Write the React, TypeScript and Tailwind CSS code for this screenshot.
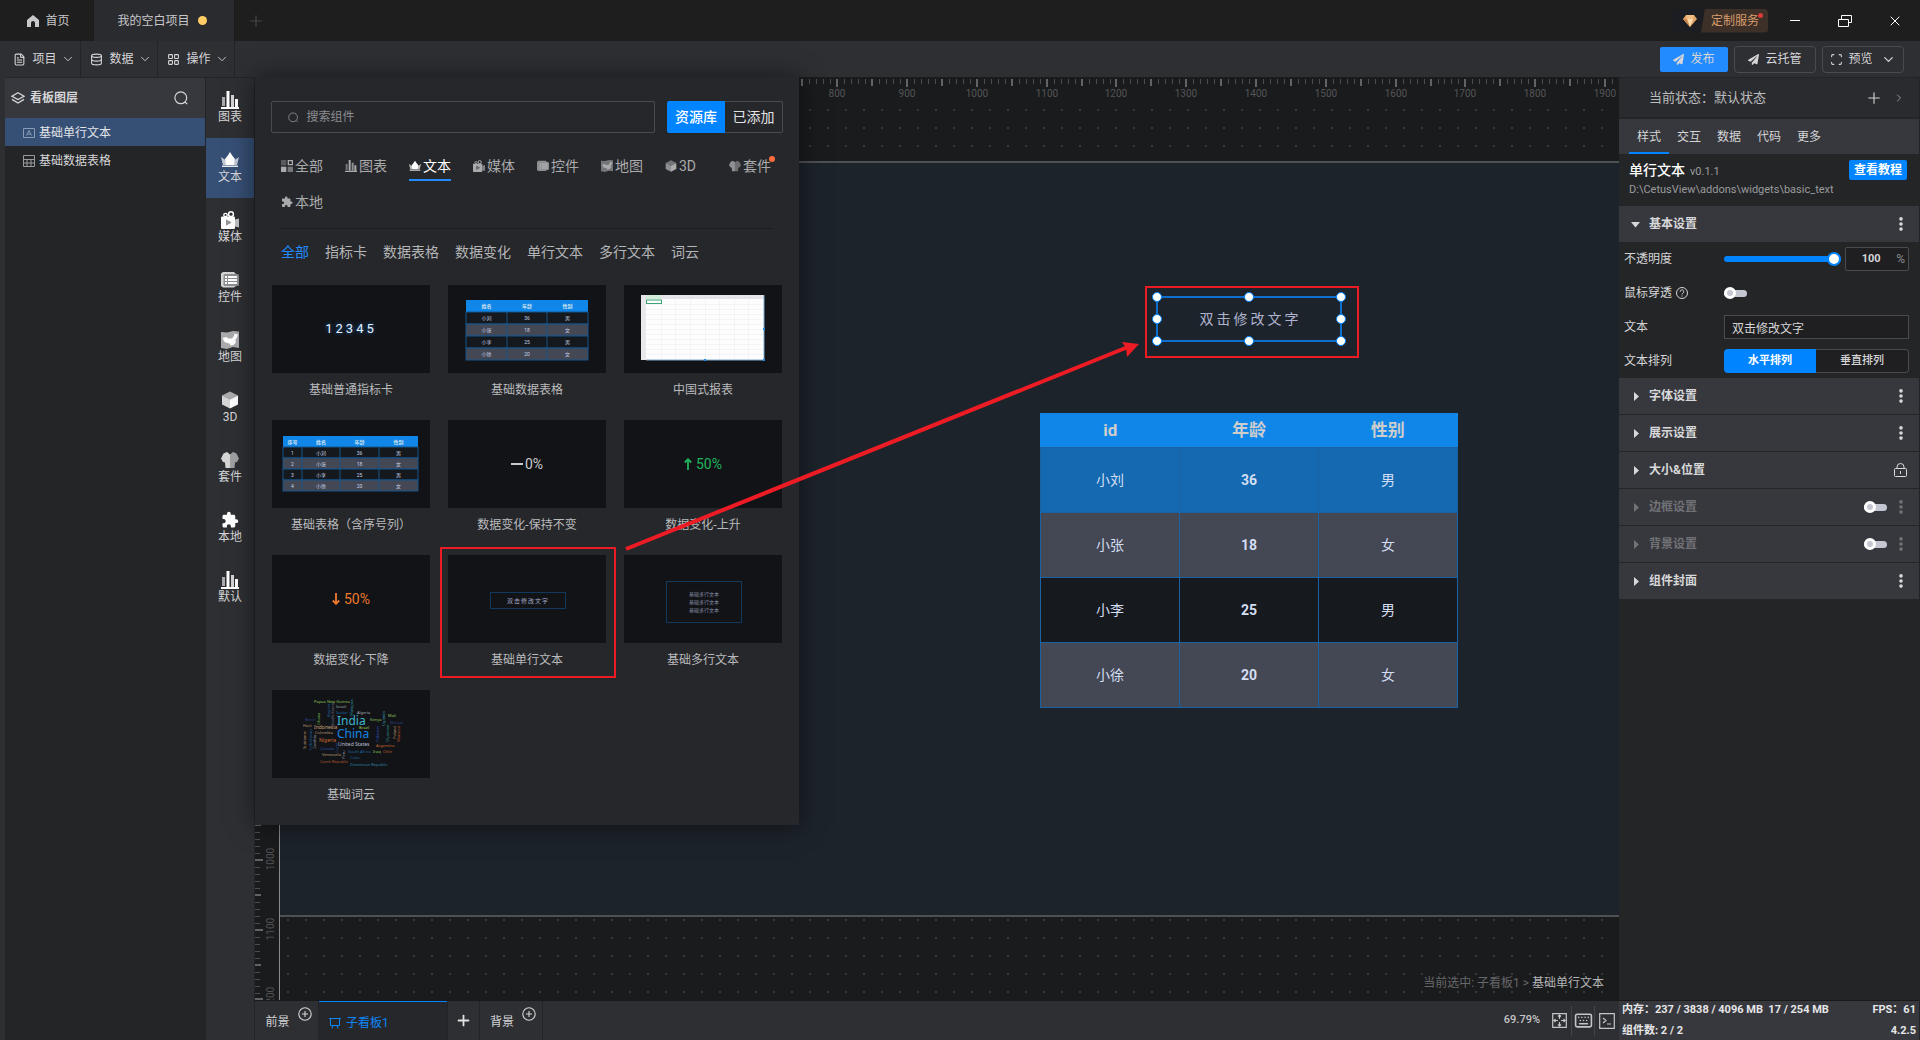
import React, { useState } from 'react'
import { ChevronDown, ChevronRight, Database, FileText, Keyboard, LayoutGrid, Plus, Scan, X } from 'lucide-react'
import { FaPaperPlane } from 'react-icons/fa'
import { MdExtension } from 'react-icons/md'
import clsx from 'clsx'

type IconProps = { size?: number }

const ChartIcon = ({ size = 18 }: IconProps) => (
  <svg width={size} height={size} viewBox="0 0 18 18" fill="currentColor">
    <path d="M1 6h3v9H1z" opacity=".6" />
    <path d="M5.500 0h3v16h-3z" />
    <path d="M10 4h3v12h-3z" opacity=".8" />
    <path d="M14 8h3v8h-3zM0 16h18v2H0z" />
  </svg>
)

const CrownIcon = ({ size = 18 }: IconProps) => (
  <svg width={size} height={size} viewBox="0 0 18 18" fill="currentColor">
    <path d="M0 6l4.500 3 1 5H2zM18 6l-4.500 3-1 5H16z" opacity=".7" />
    <path d="M9 1l2.200 3.600L14 8l-1 6H5L4 8l2.800-3.400z" />
    <path d="M1 14.500h16V16H1z" opacity=".9" />
  </svg>
)

const MediaIcon = ({ size = 18 }: IconProps) => (
  <svg width={size} height={size} viewBox="0 0 18 18" fill="currentColor">
    <circle cx="4.500" cy="4" r="1.700" fill="none" stroke="currentColor" strokeWidth="1.300" />
    <circle cx="10" cy="3.200" r="2.400" fill="none" stroke="currentColor" strokeWidth="1.500" />
    <path d="M14 8.500l4-1v9l-4-1z" opacity=".7" />
    <path fillRule="evenodd" d="M1 5.500h12a1 1 0 011 1V17a1 1 0 01-1 1H1a1 1 0 01-1-1V6.500a1 1 0 011-1zM5 8.500v6l5.500-3z" />
    <path d="M5 8.500v6l5.500-3z" opacity=".5" />
  </svg>
)

const WidgetIcon = ({ size = 18 }: IconProps) => (
  <svg width={size} height={size} viewBox="0 0 18 18" fill="currentColor">
    <path d="M2 1h11l2 2v12l-2 1.500H2L0 15V2.500z" opacity=".8" />
    <rect x="2.500" y="3" width="15.500" height="12" rx="1.500" fill="#8d8e90" />
    <path d="M4 5h2v2H4zM7 5h9v2H7zM4 8h2v2H4zM7 8h9v2H7zM4 11h2v2H4zM7 11h9v2H7z" />
  </svg>
)

const MapIcon = ({ size = 18 }: IconProps) => (
  <svg width={size} height={size} viewBox="0 0 18 18" fill="currentColor">
    <path d="M0 1l6 .5 6-1.500 6 .5V17l-6-1-6 2-6-1z" opacity=".6" />
    <path d="M1.500 7l4-1 1.500 1.500h4L13 5l.5-2.500 3.500 1-1 3-1.500 2 .5 3-2.500 2.500-3 .5-1-2-2.500-.5-2.500-1z" />
  </svg>
)

const CubeIcon = ({ size = 18 }: IconProps) => (
  <svg width={size} height={size} viewBox="0 0 18 18" fill="currentColor">
    <path d="M9 .5l8 4-8 4-8-4z" opacity=".6" />
    <path d="M1 4.500l8 4v9l-8-4z" opacity=".8" />
    <path d="M17 4.500l-8 4v9l8-4z" />
  </svg>
)

const SuitIcon = ({ size = 18 }: IconProps) => (
  <svg width={size} height={size} viewBox="0 0 18 18" fill="currentColor">
    <path d="M6 1l3 2.500V17H4.500L4 11.500 2 11 0 7.500 2.500 2.500z" opacity=".8" />
    <path d="M12 1L9 3.500V17h4.500l.5-5.500 2-.5 2-3.500-2.500-5z" opacity=".55" />
  </svg>
)

const AllIcon = ({ size = 18 }: IconProps) => (
  <svg width={size} height={size} viewBox="0 0 18 18" fill="currentColor">
    <path d="M0 0h8v8H0z" opacity=".4" />
    <path d="M11 1h6v6h-6z" fill="none" stroke="currentColor" strokeWidth="2" />
    <path d="M0 10h8v8H0z" />
    <path d="M10 10h8v8h-8z" opacity=".6" />
  </svg>
)

const SearchIcon = ({ size = 14 }: IconProps) => (
  <svg width={size} height={size} viewBox="0 0 14 14" fill="none" stroke="currentColor" strokeWidth="1.200">
    <circle cx="6.800" cy="6.800" r="5.900" />
    <path d="M11 11l2.200 2.200" />
  </svg>
)

const PlusCircleIcon = () => (
  <svg width={14} height={14} viewBox="0 0 14 14" fill="none" stroke="currentColor" strokeWidth="1.100">
    <circle cx="7" cy="7" r="6.200" />
    <path d="M7 4v6M4 7h6" />
  </svg>
)

const MoreIcon = () => (
  <svg width={4} height={14} viewBox="0 0 4 14" fill="currentColor">
    <circle cx="2" cy="1.900" r="1.800" />
    <circle cx="2" cy="7" r="1.800" />
    <circle cx="2" cy="12.100" r="1.800" />
  </svg>
)

const RAIL = [
  { label: '图表', icon: ChartIcon },
  { label: '文本', icon: CrownIcon },
  { label: '媒体', icon: MediaIcon },
  { label: '控件', icon: WidgetIcon },
  { label: '地图', icon: MapIcon },
  { label: '3D', icon: CubeIcon },
  { label: '套件', icon: SuitIcon },
  { label: '本地', icon: MdExtension },
  { label: '默认', icon: ChartIcon },
]

const CATEGORIES = [
  { label: '全部', icon: AllIcon },
  { label: '图表', icon: ChartIcon },
  { label: '文本', icon: CrownIcon },
  { label: '媒体', icon: MediaIcon },
  { label: '控件', icon: WidgetIcon },
  { label: '地图', icon: MapIcon },
  { label: '3D', icon: CubeIcon },
  { label: '套件', icon: SuitIcon, dot: true },
  { label: '本地', icon: MdExtension },
]

const FILTERS = ['全部', '指标卡', '数据表格', '数据变化', '单行文本', '多行文本', '词云']

const TABLE_ROWS = [
  { name: '小刘', age: '36', sex: '男', bg: 'bg-[#1469b1]' },
  { name: '小张', age: '18', sex: '女', bg: 'bg-[#444754]' },
  { name: '小李', age: '25', sex: '男', bg: 'bg-[#16191e]' },
  { name: '小徐', age: '20', sex: '女', bg: 'bg-[#444754]' },
]

const MiniTable = ({ x, width, y, rowHeight, cols, head, rows }: {
  x: number
  width: number
  y: number
  rowHeight: number
  cols: number[]
  head: string[]
  rows: string[][]
}) => {
  const edges = [...cols, x + width]
  return (
    <svg viewBox="0 0 158 88" className="size-full" textAnchor="middle" fontSize="5">
      <rect x={x} y={y} width={width} height={rowHeight} fill="#1087e8" />
      {head.map((h, i) => (
        <text key={h} x={(edges[i] + edges[i + 1]) / 2} y={y + rowHeight / 2 + 2} fill="#d3e2ee" fontWeight="700">{h}</text>
      ))}
      {rows.map((row, r) => (
        <g key={r}>
          <rect x={x} y={y + rowHeight * (r + 1)} width={width} height={rowHeight} fill={r % 2 ? '#444754' : '#15181d'} stroke="#17548a" strokeWidth="1" />
          {row.map((c, i) => (
            <text key={i} x={(edges[i] + edges[i + 1]) / 2} y={y + rowHeight * (r + 1.5) + 2} fill="#c6d3e8">{c}</text>
          ))}
        </g>
      ))}
      {cols.slice(1).map((c) => (
        <path key={c} d={`M${c} ${y + rowHeight}V${y + rowHeight * 5}`} stroke="#17548a" />
      ))}
    </svg>
  )
}

const SheetThumb = () => (
  <svg viewBox="0 0 158 88" className="size-full">
    <rect x="17" y="10" width="123" height="65" fill="#fdfdfe" />
    <path d="M17 10h123v4H17z" fill="#e6e4e8" />
    <path d="M17 14h5v61h-5z" fill="#e9e9ec" />
    <path d="M22 10h15v4H22z" fill="#d3ecda" />
    <path d="M22 19.500h117M22 24.500h117M22 29.500h117M22 34.500h117M22 39.500h117M22 44.500h117M22 49.500h117M22 54.500h117M22 59.500h117M22 64.500h117M22 69.500h117M37.500 14v60M51.500 14v60M66.500 14v60M81.500 14v60M95.500 14v60M110.500 14v60M124.500 14v60" stroke="#efeff2" strokeWidth=".7" />
    <rect x="22.500" y="15" width="15" height="3.500" fill="#fff" stroke="#3da276" />
    <path d="M140 10v65H22" fill="none" stroke="#7fa9cc" />
    <path d="M139 43h2v2h-2zM80 74h2v2h-2zM139 74h2v2h-2z" fill="#2488e0" />
  </svg>
)

// text, x, baseline y, size, colour, vertical
const WORDS: [string, number, number, number, string, boolean?][] = [
  ['Papua New Guinea', 42, 13, 4, '#8fc25a'],
  ['Israel', 64, 18, 4, '#9aa0a8'],
  ['Malaysia', 81, 26, 4, '#2f8fa5', true],
  ['South Korea', 62, 36, 4, '#6c7484', true],
  ['Angola', 58, 27, 4, '#1c5d91', true],
  ['Sudan', 64, 24, 4, '#1a5f9c'],
  ['Algeria', 85, 24, 4, '#a8adb5'],
  ['Mali', 116, 27, 4, '#93c65c'],
  ['Benin', 33, 31, 4, '#2a3f84'],
  ['Ghana', 48, 35, 4, '#6ba548', true],
  ['India', 65, 35, 12, '#3db5cf'],
  ['Kenya', 98, 31, 4, '#8fc25a'],
  ['Uganda', 113, 36, 4, '#3293a0', true],
  ['Malawi', 118, 34, 4, '#2c3d78'],
  ['Haiti', 31, 37, 4, '#b4926b'],
  ['Indonesia', 42, 39, 5, '#cfa27a'],
  ['Brazil', 87, 39, 4, '#9fd15f'],
  ['Pakistan', 107, 52, 4, '#2b4aa8', true],
  ['Myanmar', 117, 52, 4, '#297f78', true],
  ['Poland', 124, 49, 4, '#b38e68', true],
  ['Morocco', 128, 52, 4, '#c05a2a', true],
  ['Colombia', 43, 44, 4, '#b5946e'],
  ['China', 65, 48, 12, '#1583e0'],
  ['Suriname', 34, 59, 4, '#a88a68', true],
  ['Uzbekistan', 40, 60, 4, '#1c5d91', true],
  ['Zambia', 44, 59, 4, '#8a8f9a', true],
  ['Nigeria', 47, 52, 5, '#cf6a2e'],
  ['United States', 66, 56, 5, '#b8bfd2'],
  ['Argentina', 104, 57, 4, '#c46630'],
  ['Canada', 48, 60, 4, '#2b4a9c'],
  ['Egypt', 66, 63, 4, '#263c7c', true],
  ['Venezuela', 50, 66, 4, '#b59a72'],
  ['Peru', 73, 69, 4, '#8f95a2', true],
  ['South Africa', 76, 63, 4, '#1d639c'],
  ['Iraq', 101, 63, 4, '#8fc25a'],
  ['Chile', 111, 63, 4, '#bd5a2c'],
  ['Cuba', 78, 69, 4, '#1c5d91'],
  ['Czech Republic', 48, 73, 4, '#b65a30'],
  ['Dominican Republic', 78, 76, 4, '#2e86a8'],
]

const WordCloud = () => (
  <svg viewBox="0 0 158 88" className="size-full font-['Noto_Sans',sans-serif]">
    {WORDS.map(([word, x, y, size, fill, vertical]) => (
      <text key={word} x={x} y={y} fontSize={size} fill={fill} transform={vertical ? `rotate(-90 ${x} ${y})` : undefined}>{word}</text>
    ))}
  </svg>
)

const ArrowGlyph = ({ down }: { down?: boolean }) => (
  <svg width={8} height={12} viewBox="0 0 8 12" fill="none" stroke="currentColor" strokeWidth="1.800">
    <path d={down ? 'M4 0v11M.8 7.500L4 10.800l3.200-3.300' : 'M4 12V1M.8 4.500L4 1.200l3.200 3.300'} />
  </svg>
)

const CARDS: { label: string; marked?: boolean; thumb: React.ReactNode }[] = [
  {
    label: '基础普通指标卡',
    thumb: <span className="text-[13px] tracking-[3px] text-[#e4f2ff] [text-shadow:0_0_4px_#1a6cc0]">12345</span>,
  },
  {
    label: '基础数据表格',
    thumb: (
      <MiniTable x={18} y={15} width={122} rowHeight={12} cols={[18, 59, 99]} head={['姓名', '年龄', '性别']}
        rows={[['小刘', '36', '男'], ['小张', '18', '女'], ['小李', '25', '男'], ['小徐', '20', '女']]} />
    ),
  },
  { label: '中国式报表', thumb: <SheetThumb /> },
  {
    label: '基础表格（含序号列）',
    thumb: (
      <MiniTable x={11} y={16} width={135} rowHeight={11} cols={[11, 30, 68, 107]} head={['序号', '姓名', '年龄', '性别']}
        rows={[['1', '小刘', '36', '男'], ['2', '小张', '18', '女'], ['3', '小李', '25', '男'], ['4', '小徐', '20', '女']]} />
    ),
  },
  {
    label: '数据变化-保持不变',
    thumb: (
      <span className="flex items-center gap-[2px] text-sm text-[#c9cacd]">
        <span className="h-[2px] w-3 bg-current" />0%
      </span>
    ),
  },
  {
    label: '数据变化-上升',
    thumb: <span className="flex items-center gap-1 text-sm text-[#1fb45c]"><ArrowGlyph />50%</span>,
  },
  {
    label: '数据变化-下降',
    thumb: <span className="flex items-center gap-1 text-sm text-[#ef7a2d]"><ArrowGlyph down />50%</span>,
  },
  {
    label: '基础单行文本',
    marked: true,
    thumb: (
      <svg viewBox="0 0 158 88" className="size-full">
        <rect x="42.500" y="37.500" width="75" height="16" fill="none" stroke="#11395f" />
        <text x="80" y="48" textAnchor="middle" fontSize="6" letterSpacing="1" fill="#a6abc6">双击修改文字</text>
      </svg>
    ),
  },
  {
    label: '基础多行文本',
    thumb: (
      <svg viewBox="0 0 158 88" className="size-full" textAnchor="middle" fontSize="5" fill="#8a8fa8">
        <rect x="42.500" y="26.500" width="75" height="41" fill="none" stroke="#11395f" />
        <text x="80" y="41">基础多行文本</text>
        <text x="80" y="49">基础多行文本</text>
        <text x="80" y="57">基础多行文本</text>
      </svg>
    ),
  },
  { label: '基础词云', thumb: <WordCloud /> },
]

const SECTIONS = [
  { label: '字体设置' },
  { label: '展示设置' },
  { label: '大小&位置', lock: true },
  { label: '边框设置', off: true },
  { label: '背景设置', off: true },
  { label: '组件封面' },
]

const UNIT = 0.6979

const tickPositions = (from: number, to: number, step: number) => {
  const out: number[] = []
  for (let v = from; v <= to; v += step) out.push(v)
  return out
}

const TopRuler = () => (
  <svg className="h-6 w-full overflow-hidden">
    {tickPositions(0, 1920, 10).map((v) => {
      const major = v % 100 === 0
      const mid = v % 50 === 0
      return <rect key={v} x={Math.round(v * UNIT) + 24 - (mid ? 1 : 0)} y={2} width={mid ? 2 : 1} height={major ? 8 : mid ? 7 : 5} fill={mid ? '#626366' : '#4c4d50'} />
    })}
    {tickPositions(0, 1900, 100).map((v) => (
      <text key={v} x={Math.round(v * UNIT) + 24} y={20} fontSize="10" textAnchor="middle" fill="#545558">{v}</text>
    ))}
  </svg>
)

const LeftRuler = () => (
  <svg className="h-full w-6 overflow-hidden">
    {tickPositions(0, 1200, 10).map((v) => {
      const major = v % 100 === 0
      const mid = v % 50 === 0
      return <rect key={v} x={0} y={Math.round(v * UNIT) + 61 - (mid ? 1 : 0)} width={major ? 8 : mid ? 6 : 5} height={mid ? 2 : 1} fill={mid ? '#626366' : '#4c4d50'} />
    })}
    {tickPositions(0, 1200, 100).map((v) => {
      const y = Math.round(v * UNIT) + 60
      return <text key={v} x={19} y={y} fontSize="10" textAnchor="middle" fill="#545558" transform={`rotate(-90 19 ${y})`}>{v}</text>
    })}
  </svg>
)

const Switch = ({ id, label }: { id: string; label: string }) => (
  <input
    id={id}
    type="checkbox"
    role="switch"
    aria-label={label}
    className="relative h-[7px] w-[23px] shrink-0 appearance-none rounded-full bg-[#c4c7d2] before:absolute before:-top-[3px] before:left-0 before:size-[12px] before:rounded-full before:border-[3px] before:border-white before:bg-[#c4c7d2] checked:bg-[#0084ff]"
  />
)

const TitleBar = () => (
  <header className="flex h-[41px] shrink-0 items-stretch bg-[#1e1e1e] text-xs text-[#c8c8ca]">
    <button className="flex w-[94px] items-center justify-center gap-[6px] border-r border-[#19191a] pl-1">
      <svg width={12} height={12} viewBox="0 0 12 12" fill="currentColor"><path d="M6 0l6 5v7H8V8a2 2 0 00-4 0v4H0V5z" /></svg>
      首页
    </button>
    <button className="flex w-[140px] items-center justify-center gap-2 bg-[#2a2b2f] pr-1">
      我的空白项目
      <span className="size-[9px] rounded-full bg-[#ffcc66]" />
    </button>
    <button aria-label="新建" className="flex w-[42px] items-center justify-center border-l border-[#19191a] text-[#48494b]"><Plus size={18} strokeWidth={1.500} /></button>
    <div className="ml-auto flex items-center">
      <a href="#service" className="relative mr-4 flex h-6 items-stretch overflow-hidden rounded-sm bg-[#1c1d22] text-[#d99c6c]">
        <span className="flex w-[29px] items-center justify-end pr-1">
          <svg width={14} height={12} viewBox="0 0 14 12">
            <path d="M3 0h8l3 4-7 8-7-8z" fill="#e3a468" />
            <path d="M4 4h6l-3 8z" fill="#ffdcae" />
            <path d="M0 4h4l3 8z" fill="#cf8a50" />
            <path d="M3 0h8L10 4H4z" fill="#f2bd83" />
          </svg>
        </span>
        <span className="flex items-center bg-[#3d3029] pr-[9px] pl-[10px] [clip-path:polygon(4px_0,100%_0,100%_100%,0_100%)]">定制服务</span>
        <span className="absolute top-1 right-[5px] size-[5px] rounded-full bg-[#d93a3a]" />
      </a>
      <button aria-label="最小化" className="flex w-[22px] justify-center text-white"><span className="h-px w-[10px] bg-current" /></button>
      <button aria-label="还原" className="ml-7 flex w-[22px] justify-center text-white">
        <svg width={14} height={12} viewBox="0 0 14 12" fill="none" stroke="currentColor"><path d="M.5 4.500h10v7H.5zM3.500 4.500v-4h10v7h-3" /></svg>
      </button>
      <button aria-label="关闭" className="mr-[14px] ml-7 flex w-[22px] justify-center text-white"><X size={16} strokeWidth={1.500} /></button>
    </div>
  </header>
)

const MENUS = [
  { label: '项目', icon: FileText },
  { label: '数据', icon: Database },
  { label: '操作', icon: LayoutGrid },
]

const Toolbar = () => (
  <div className="flex h-9 shrink-0 items-stretch bg-[#2e2f33] pl-1 text-xs text-[#d5d5d7]">
    {MENUS.map(({ label, icon: Icon }) => (
      <button key={label} className="flex w-[77px] items-center justify-center border-r border-[#232427] pl-1">
        <Icon size={13} strokeWidth={2} />
        <span className="ml-[6px]">{label}</span>
        <ChevronDown size={14} strokeWidth={1.500} className="ml-1" />
      </button>
    ))}
    <div className="ml-auto flex items-center gap-[6px] pr-4">
      <button className="flex h-[25px] w-[68px] items-center justify-center gap-[6px] rounded-xs bg-[#228bff]">
        <FaPaperPlane size={11} />发布
      </button>
      <button className="flex h-[27px] w-[82px] items-center justify-center gap-[6px] rounded-sm border border-[#4a4b50]">
        <FaPaperPlane size={11} />云托管
      </button>
      <button className="flex h-[27px] w-[82px] items-center justify-center rounded-sm border border-[#4a4b50]">
        <Scan size={13} strokeWidth={2} />
        <span className="ml-[5px]">预览</span>
        <ChevronDown size={15} strokeWidth={2} className="ml-2" />
      </button>
    </div>
  </div>
)

const LayerPanel = () => (
  <aside className="w-[201px] shrink-0 border-t border-r border-[#232427] bg-[#242527] text-xs">
    <div className="flex h-10 items-center bg-[#37383d] pr-[17px] pl-[6px]">
      <svg width={14} height={12} viewBox="0 0 14 12" fill="none" stroke="#d5d5d7" strokeWidth="1.300">
        <path d="M7 .8l6 3.400-6 3.400-6-3.400zM1 7.400l6 3.600 6-3.600" />
      </svg>
      <h2 className="ml-[5px] font-bold text-[#d5d5d7]">看板图层</h2>
      <button aria-label="搜索图层" className="ml-auto text-[#d5d5d7]"><SearchIcon /></button>
    </div>
    <button className="flex h-7 w-full items-center gap-1 bg-[#364f75] pt-px pl-[18px] text-[#e2e4e8]">
      <svg width={12} height={10} viewBox="0 0 12 10" fill="none" stroke="#8a9bb5"><path d="M.5.5h11v9H.5zM3.500 7.500L6 2.500l2.500 5M4.500 6h3" /></svg>
      基础单行文本
    </button>
    <button className="flex h-7 w-full items-center gap-1 pt-px pl-[18px] text-[#d5d5d7]">
      <svg width={12} height={12} viewBox="0 0 12 12" fill="none" stroke="#9a9b9d"><path d="M.5.5h11v11H.5zM.5 4.500h11M.5 8h11M4 4.500v7M8 4.500v7" /></svg>
      基础数据表格
    </button>
  </aside>
)

const Library = () => (
  <section className="absolute top-0 left-0 w-[544px] bg-[#26272b] px-4 pt-6 pb-5 shadow-[0_0_24px_rgba(0,0,0,0.5)]">
    <div className="flex h-8 gap-3">
      <label className="flex flex-1 items-center gap-2 rounded-xs border border-[#4a4b4f] px-4 text-[#8b8c90]">
        <SearchIcon size={11} />
        <input type="search" aria-label="搜索组件" placeholder="搜索组件" className="w-full bg-transparent text-xs outline-none placeholder:text-[#8b8c90]" />
      </label>
      <div className="flex text-sm text-[#e2e2e4]">
        <button className="w-[58px] rounded-l-xs bg-[#0084ff] font-medium text-white">资源库</button>
        <button className="w-[58px] rounded-r-xs border border-l-0 border-[#4a4b4f]">已添加</button>
      </div>
    </div>

    <nav className="mx-[10px] mt-[18px] flex flex-wrap gap-x-[22px] gap-y-[6px] border-b border-[#1c1d20] pb-[11px] text-sm">
      {CATEGORIES.map(({ label, icon: Icon, dot }) => (
        <button
          key={label}
          className={clsx('relative flex h-[30px] w-[42px] items-center gap-[2px] whitespace-nowrap border-y-2 border-transparent', label === '文本' ? 'border-b-[#228bff] text-white' : 'text-[#a9aaac]')}
        >
          <Icon size={12} />
          {label}
          {dot && <span className="absolute top-[3px] -right-1 size-[6px] rounded-full bg-[#ff6b3d]" />}
        </button>
      ))}
    </nav>

    <div className="mx-[10px] mt-[13px] flex gap-4 text-sm leading-5 text-[#b4b5b7]">
      {FILTERS.map((f, i) => (
        <button key={f} className={clsx(i === 0 && 'text-[#228bff]')}>{f}</button>
      ))}
    </div>

    <ul className="mx-px mt-[23px] grid grid-cols-3 gap-x-[18px] gap-y-5">
      {CARDS.map(({ label, marked, thumb }) => (
        <li key={label} className="relative text-center">
          <div className="flex h-[88px] items-center justify-center bg-[#121317]">{thumb}</div>
          <p className="mt-[7px] text-xs leading-5 text-[#b9babc]">{label}</p>
          {marked && <span className="absolute -top-2 -right-[10px] -bottom-2 -left-2 border-2 border-[#ed1c24]" />}
        </li>
      ))}
    </ul>
  </section>
)

const HANDLES = [
  'top-0 left-0', 'top-0 left-1/2', 'top-0 left-full',
  'top-1/2 left-0', 'top-1/2 left-full',
  'top-full left-0', 'top-full left-1/2', 'top-full left-full',
]

const Board = () => (
  <div className="relative mt-[60px] h-[756px] border-y-2 border-[#4f5052] bg-[#1c232a]">
    <div className="absolute top-[123px] left-[865px] h-[72px] w-[214px] border-2 border-[#ed1c24]">
      <div className="absolute top-2 left-[9px] flex h-[46px] w-[186px] items-center justify-center border-2 border-[#0f6fcf] text-sm text-[#b0b3cf]">
        <span className="pl-[3px] tracking-[3px]">双击修改文字</span>
        <div className="absolute -inset-px">
          {HANDLES.map((pos) => (
            <span key={pos} className={clsx('absolute size-[10px] -translate-x-1/2 -translate-y-1/2 rounded-full border border-[#0084ff] bg-white', pos)} />
          ))}
        </div>
      </div>
    </div>

    <table className="absolute top-[250px] left-[760px] w-[418px] table-fixed border-collapse text-center text-sm text-[#d3def2]">
      <thead>
        <tr className="h-[34px] border border-[#1087e8] bg-[#1087e8] text-[17px] text-[#cdcdcd]">
          <th className="p-0">id</th>
          <th className="p-0">年龄</th>
          <th className="p-0">性别</th>
        </tr>
      </thead>
      <tbody>
        {TABLE_ROWS.map(({ name, age, sex, bg }) => (
          <tr key={name} className={clsx('h-[65px]', bg)}>
            <td className="border border-[#1a62a3] p-0">{name}</td>
            <td className="border border-[#1a62a3] p-0 font-bold">{age}</td>
            <td className="border border-[#1a62a3] p-0">{sex}</td>
          </tr>
        ))}
      </tbody>
    </table>
  </div>
)

const BottomBar = () => (
  <footer className="flex h-10 shrink-0 items-stretch border-t border-[#19191a] bg-[#2e2f33] text-xs text-[#d5d5d7]">
    <button className="flex w-16 items-start justify-center gap-2 border-r border-[#232427] pt-[6px] pl-1">
      <span className="pt-[7px]">前景</span><PlusCircleIcon />
    </button>
    <button className="flex w-32 items-center gap-[5px] border-t border-[#0084ff] bg-[#26272b] pt-1 pl-[10px] text-[#0f86f5]">
      <svg width={12} height={11} viewBox="0 0 12 11" fill="none" stroke="currentColor"><path d="M0 .5h12M1.500.5v7h9v-7M4 7.500L3 10.500M8 7.500l1 3" /></svg>
      子看板1
    </button>
    <button aria-label="添加看板" className="flex w-[33px] items-center justify-center border-x border-[#232427] text-[#e2e2e4]"><Plus size={17} strokeWidth={2.500} /></button>
    <button className="flex w-[63px] items-start justify-center gap-2 border-r border-[#232427] pt-[6px] pl-1">
      <span className="pt-[7px]">背景</span><PlusCircleIcon />
    </button>
    <div className="ml-auto flex items-center text-[#c4c5c7]">
      <span className="mr-[7px] text-[11px] font-medium">69.79%</span>
      <button aria-label="适应画布" className="flex w-6 justify-center">
        <svg width={15} height={15} viewBox="0 0 15 15" fill="none" stroke="currentColor" strokeWidth="1.200">
          <path d="M.7.7h13.600v13.600H.7zM7.500 2v4M7.500 9v4M2 7.500h4M9 7.500h4M6 3.500L7.500 2 9 3.500M6 11.500L7.500 13 9 11.500M3.500 6L2 7.500 3.500 9M11.500 6L13 7.500 11.500 9" />
        </svg>
      </button>
      <button aria-label="快捷键" className="flex h-[30px] w-6 items-center justify-center border-x border-[#434448]"><Keyboard size={19} strokeWidth={2} /></button>
      <button aria-label="控制台" className="flex w-6 justify-center">
        <svg width={16} height={16} viewBox="0 0 16 16" fill="none" stroke="currentColor" strokeWidth="1.200"><path d="M.7.7h14.600v14.600H.7zM4 5l3 2.500L4 10M8 11h4" /></svg>
      </button>
    </div>
  </footer>
)

const SectionHead = ({ label, lock, off, open }: { label: string; lock?: boolean; off?: boolean; open?: boolean }) => (
  <div className={clsx('flex h-9 items-center bg-[#37383d] pr-4 pl-3', off ? 'text-[#717276]' : 'text-[#d8d8da]')}>
    <button aria-expanded={!!open} className="flex flex-1 items-center text-xs font-bold">
      <span className="flex w-[18px]">
        <svg width={9} height={9} viewBox="0 0 9 9" fill="currentColor"><path d={open ? 'M0 2h9L4.500 7.500z' : 'M3 0v9l5-4.500z'} /></svg>
      </span>
      {label}
    </button>
    {off && <span className="mr-3 flex"><Switch id={label} label={label} /></span>}
    {lock ? (
      <svg width={13} height={14} viewBox="0 0 13 14" fill="none" stroke="currentColor" className="-mr-1"><path d="M1.500 5.500h10a1 1 0 011 1v6a1 1 0 01-1 1h-10a1 1 0 01-1-1v-6a1 1 0 011-1zM3 5.500V4a3.500 3.500 0 017 0v1.500M6.500 8v3" /></svg>
    ) : (
      <button aria-label={`${label}更多`}><MoreIcon /></button>
    )}
  </div>
)

const Inspector = () => {
  const [opacity, setOpacity] = useState(100)
  const [text, setText] = useState('双击修改文字')
  return (
    <aside className="flex w-[301px] shrink-0 flex-col border-t border-r border-[#232427] bg-[#242527] text-xs text-[#d5d5d7]">
      <div className="mb-[2px] flex h-[39px] shrink-0 items-center bg-[#2a2b2f] pr-[14px] pl-[30px] text-[13px] text-[#bcbdbf]">
        当前状态：默认状态
        <button aria-label="添加状态" className="ml-auto text-[#d5d5d7]"><Plus size={18} strokeWidth={1.500} /></button>
        <button aria-label="展开" className="ml-[10px]"><ChevronRight size={12} strokeWidth={1.500} /></button>
      </div>

      <nav className="flex h-[35px] shrink-0 bg-[#37383d] pl-[10px]">
        {['样式', '交互', '数据', '代码', '更多'].map((tab, i) => (
          <button key={tab} className={clsx('w-10 border-y-2 border-transparent', i === 0 && 'border-b-[#0084ff]')}>{tab}</button>
        ))}
      </nav>

      <div className="flex h-[52px] shrink-0 items-start justify-between pt-[6px] pr-3 pl-[10px]">
        <div className="text-[11px] text-[#9a9b9d]">
          <p className="leading-5"><b className="mr-[5px] text-sm leading-5 font-medium text-white">单行文本</b>v0.1.1</p>
          <p className="leading-4 whitespace-nowrap">D:\CetusView\addons\widgets\basic_text</p>
        </div>
        <a href="#guide" className="h-5 shrink-0 rounded-xs bg-[#0084ff] px-[5px] leading-5 font-bold whitespace-nowrap text-white">查看教程</a>
      </div>

      <SectionHead label="基本设置" open />
      <div className="grid grid-cols-[100px_1fr] items-center gap-y-[10px] pt-[5px] pr-[10px] pb-[5px] pl-[5px]">
        <label htmlFor="opacity">不透明度</label>
        <div className="flex items-center gap-1">
          <input
            id="opacity"
            type="range"
            value={opacity}
            onChange={(e) => setOpacity(Number(e.target.value))}
            className="h-[6px] w-0 flex-1 appearance-none rounded-full bg-[#0084ff] [&::-webkit-slider-thumb]:size-[14px] [&::-webkit-slider-thumb]:appearance-none [&::-webkit-slider-thumb]:rounded-full [&::-webkit-slider-thumb]:border-2 [&::-webkit-slider-thumb]:border-[#0084ff] [&::-webkit-slider-thumb]:bg-white"
          />
          <label className="flex h-6 w-16 items-center rounded-xs border border-[#4a4b4f] bg-[#1f1f21] pr-[3px] text-[#8b8c90]">
            <input aria-label="不透明度数值" value={opacity} onChange={(e) => setOpacity(Number(e.target.value) || 0)} className="w-0 flex-1 bg-transparent text-center text-[11px] font-bold text-[#d5d5d7] outline-none" />
            %
          </label>
        </div>

        <label htmlFor="through" className="flex h-6 items-center gap-1">
          鼠标穿透
          <svg width={12} height={12} viewBox="0 0 12 12" fill="none" stroke="currentColor"><circle cx="6" cy="6" r="5.500" /><path d="M4.200 4.800a1.800 1.800 0 113 1.200c-.7.500-1.200.8-1.200 1.500M6 8.500v1" /></svg>
        </label>
        <span className="flex"><Switch id="through" label="鼠标穿透" /></span>

        <label htmlFor="text">文本</label>
        <input id="text" value={text} onChange={(e) => setText(e.target.value)} className="h-6 w-full border border-[#4a4b4f] bg-[#1f1f21] px-[7px] outline-none" />

        <span>文本排列</span>
        <div className="flex h-6 text-[11px] font-medium">
          <button className="flex-1 rounded-l-sm bg-[#0084ff] font-bold text-white">水平排列</button>
          <button className="flex-1 rounded-r-sm border border-l-0 border-[#4a4b4f] bg-[#1f1f21]">垂直排列</button>
        </div>
      </div>

      <div className="flex flex-col gap-px">
        {SECTIONS.map((s) => <SectionHead key={s.label} {...s} />)}
      </div>

      <div className="mt-auto flex h-10 justify-between border-t border-[#19191a] bg-[#37383d] px-[3px] text-[11px] leading-[18px] font-bold text-[#e6e6e8]">
        <div className="flex flex-col justify-between">
          <p>内存：237 / 3838 / 4096 MB&nbsp; 17 / 254 MB</p>
          <p>组件数: 2 / 2</p>
        </div>
        <div className="flex flex-col justify-between text-right">
          <p>FPS：61</p>
          <p>4.2.5</p>
        </div>
      </div>
    </aside>
  )
}

export default function App() {
  return (
    <div className="flex h-screen flex-col overflow-hidden bg-[#1e1e1e] font-['Roboto','Noto_Sans_CJK_SC',sans-serif] text-[#d5d5d7]">
      <TitleBar />
      <Toolbar />
      <main className="flex min-h-0 flex-1 bg-[#2e2f33] pl-[5px]">
        <LayerPanel />

        <nav className="w-12 shrink-0 border-t border-[#232427] bg-[#2e2f33]">
          {RAIL.map(({ label, icon: Icon }) => (
            <button key={label} className={clsx('flex h-[60px] w-full flex-col items-center pt-[13px] text-xs leading-4', label === '文本' && 'bg-[#364f75]')}>
              <span className="text-white"><Icon size={18} /></span>
              {label}
            </button>
          ))}
        </nav>

        <div className="flex min-w-0 flex-1 flex-col border-l border-[#232427]">
          <div className="relative flex min-h-0 flex-1 flex-col bg-[#1a1b1c]">
            <TopRuler />
            <div className="flex min-h-0 flex-1">
              <div className="w-[25px] shrink-0 border-r border-[#8a8b8d]"><LeftRuler /></div>
              <div className="relative min-w-0 flex-1 overflow-hidden bg-[radial-gradient(#38393b_1px,transparent_1px)] bg-size-[18px_18px] bg-position-[-1px_0]">
                <Board />
                <p className="absolute right-[15px] bottom-[9px] text-xs text-[#66676a]">当前选中: 子看板1 &gt; <span className="text-[#b4b5b7]">基础单行文本</span></p>
              </div>
            </div>
            <Library />
            <svg className="pointer-events-none absolute inset-0 size-full">
              <path d="M371 472L873 270" stroke="#ed1c24" strokeWidth="4" />
              <path d="M884 267l-17-2 4 6 1 9z" fill="#ed1c24" />
            </svg>
          </div>
          <BottomBar />
        </div>

        <Inspector />
      </main>
    </div>
  )
}
